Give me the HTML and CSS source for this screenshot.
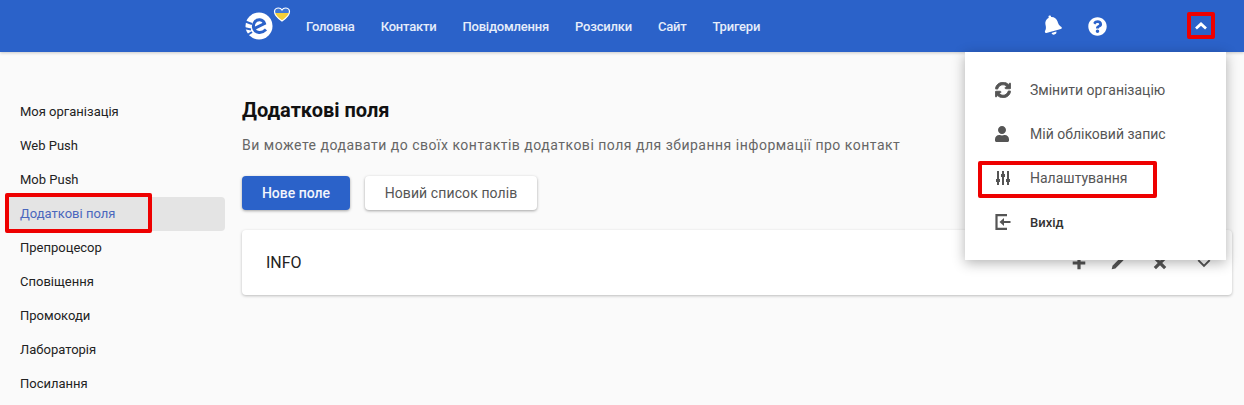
FILE: index.html
```html
<!DOCTYPE html>
<html lang="en">
<head>
  <meta charset="UTF-8">
  <meta name="viewport" content="width=device-width, initial-scale=1.0">
  <title>Додаткові поля</title>
  <link rel="stylesheet" href="styles.css">
</head>
<body>

<header class="topbar">
  <svg class="logo" viewBox="0 0 48 40" width="48" height="40">
    <defs>
      <linearGradient id="flag" x1="0" y1="0" x2="0" y2="1">
        <stop offset="0.42" stop-color="#3f78d6"/>
        <stop offset="0.42" stop-color="#f3cf3a"/>
      </linearGradient>
    </defs>
    <circle cx="16" cy="20" r="13.500" fill="#fff"/>
    <path d="M1 15 L9 18 M1 22 L8 23.500 M3 30 L9 26" stroke="#2b62c9" stroke-width="2" fill="none"/>
    <path d="M10.500 23 L21.500 17.500 C20 13 14 12.500 11.500 16.500 C9 20.500 11 26 16 26.500 C19 26.800 21 25.500 23 23.500" stroke="#2b62c9" stroke-width="3" fill="none"/>
    <path d="M39 15 C33 11 31.500 8 31.500 5.500 C31.500 3.500 33.500 2 35.500 2 C37 2 38.300 2.800 39 4 C39.700 2.800 41 2 42.500 2 C44.500 2 46.500 3.500 46.500 5.500 C46.500 8 45 11 39 15 Z" fill="url(#flag)" stroke="#fff" stroke-width="1.200"/>
  </svg>
  <nav class="topnav">
    <a href="#">Головна</a>
    <a href="#">Контакти</a>
    <a href="#">Повідомлення</a>
    <a href="#">Розсилки</a>
    <a href="#">Сайт</a>
    <a href="#">Тригери</a>
  </nav>
  <div class="top-icons">
    <svg class="bell" viewBox="0 0 448 512" width="18" height="20"><path fill="#fff" d="M224 512c35.32 0 63.97-28.65 63.97-64H160.03c0 35.35 28.65 64 63.97 64zm215.39-149.71c-19.32-20.76-55.47-51.99-55.47-154.29 0-77.7-54.48-139.9-127.94-155.16V32c0-17.67-14.32-32-31.98-32s-31.98 14.33-31.98 32v20.84C118.56 68.1 64.08 130.3 64.08 208c0 102.3-36.15 133.53-55.47 154.29-6 6.45-8.66 14.16-8.61 21.71.11 16.4 12.98 32 32.1 32h383.8c19.12 0 32-15.6 32.1-32 .05-7.55-2.61-15.27-8.61-21.71z"/></svg>
    <svg class="help" viewBox="0 0 512 512" width="19" height="19"><path fill="#fff" d="M504 256c0 136.997-111.043 248-248 248S8 392.997 8 256C8 119.083 119.043 8 256 8s248 111.083 248 248zM262.655 90c-54.497 0-89.255 22.957-116.549 63.758-3.536 5.286-2.353 12.415 2.715 16.258l34.699 26.31c5.205 3.947 12.621 3.008 16.665-2.122 17.864-22.658 30.113-35.797 57.303-35.797 20.429 0 45.698 13.148 45.698 32.958 0 14.976-12.363 22.667-32.534 33.976C247.128 238.528 216 254.941 216 296v4c0 6.627 5.373 12 12 12h56c6.627 0 12-5.373 12-12v-1.333c0-28.462 83.186-29.647 83.186-106.667 0-58.002-60.165-102-116.531-102zM256 338c-25.365 0-46 20.635-46 46 0 25.364 20.635 46 46 46s46-20.636 46-46c0-25.365-20.635-46-46-46z"/></svg>
    <span class="toggle">
      <svg viewBox="0 0 14 10" width="14" height="10"><path d="M2 7.500 L7 3 L12 7.500" fill="none" stroke="#fff" stroke-width="2.800"/></svg>
    </span>
  </div>
</header>

<div class="page">
  <aside class="sidebar">
    <a href="#">Моя організація</a>
    <a href="#">Web Push</a>
    <a href="#">Mob Push</a>
    <a href="#" class="active">Додаткові поля</a>
    <a href="#">Препроцесор</a>
    <a href="#">Сповіщення</a>
    <a href="#">Промокоди</a>
    <a href="#">Лабораторія</a>
    <a href="#">Посилання</a>
  </aside>

  <main class="content">
    <h1>Додаткові поля</h1>
    <p class="lead">Ви можете додавати до своїх контактів додаткові поля для збирання інформації про контакт</p>
    <div class="actions">
      <button class="btn btn-primary">Нове поле</button>
      <button class="btn">Новий список полів</button>
    </div>
    <section class="card">
      <span class="card-title">INFO</span>
      <div class="card-icons">
        <svg viewBox="0 0 14 14" width="16" height="16"><path d="M7 1.500 V12.500 M1.500 7 H12.500" stroke="#555" stroke-width="2.800" fill="none"/></svg>
        <svg class="icon-pencil" viewBox="0 0 14 14" width="16" height="16"><path d="M1.500 12.500 L2.200 9.300 L9.300 2.200 L11.800 4.700 L4.700 11.800 Z" fill="#555"/></svg>
        <svg viewBox="0 0 14 14" width="16" height="16"><path d="M2.500 2.500 L11.500 11.500 M11.500 2.500 L2.500 11.500" stroke="#555" stroke-width="2.800" fill="none"/></svg>
        <svg class="icon-chevron" viewBox="0 0 14 14" width="16" height="16"><path d="M2 4.500 L7 9.500 L12 4.500" stroke="#555" stroke-width="1.800" fill="none"/></svg>
      </div>
    </section>
  </main>
</div>

<div class="dropdown">
  <a href="#">
    <svg viewBox="0 0 512 512" width="16" height="16"><path fill="#555" stroke="#555" stroke-width="28" d="M370.72 133.28C339.458 104.008 298.888 87.962 255.848 88c-77.458.068-144.328 53.178-162.791 126.85-1.344 5.363-6.122 9.15-11.651 9.15H24.103c-7.498 0-13.194-6.807-11.807-14.176C33.933 94.924 134.813 8 256 8c66.448 0 126.791 26.136 171.315 68.685L463.03 40.97C478.149 25.851 504 36.559 504 57.941V192c0 13.255-10.745 24-24 24H345.941c-21.382 0-32.09-25.851-16.971-40.971l41.75-41.749zM32 296h134.059c21.382 0 32.09 25.851 16.971 40.971l-41.75 41.75c31.262 29.273 71.835 45.319 114.876 45.28 77.418-.07 144.315-53.144 162.787-126.849 1.344-5.363 6.122-9.15 11.651-9.15h57.304c7.498 0 13.194 6.807 11.807 14.176C478.067 417.076 377.187 504 256 504c-66.448 0-126.791-26.136-171.315-68.685L48.97 471.03C33.851 486.149 8 475.441 8 454.059V320c0-13.255 10.745-24 24-24z"/></svg>
    Змінити організацію
  </a>
  <a href="#">
    <svg viewBox="0 0 448 512" width="14" height="16"><path fill="#555" d="M224 256c70.7 0 128-57.3 128-128S294.7 0 224 0 96 57.3 96 128s57.3 128 128 128zm89.6 32h-16.7c-22.2 10.2-46.9 16-72.9 16s-50.6-5.800-72.900-16h-16.700C60.200 288 0 348.200 0 422.400V464c0 26.500 21.500 48 48 48h352c26.500 0 48-21.500 48-48v-41.600c0-74.200-60.200-134.400-134.400-134.400z"/></svg>
    Мій обліковий запис
  </a>
  <a href="#">
    <svg viewBox="0 0 16 16" width="16" height="16"><path d="M3 1 V15 M8 1 V15 M13 1 V15" stroke="#555" stroke-width="2" fill="none"/><path d="M1 9 H5 V12 H1 Z M6 4 H10 V7 H6 Z M11 9 H15 V12 H11 Z" fill="#555"/></svg>
    Налаштування
  </a>
  <a href="#" class="logout">
    <svg viewBox="0 0 16 16" width="16" height="16"><path d="M12 1.200 H1.500 V14.800 H12" stroke="#555" stroke-width="2.200" fill="none"/><path d="M15.500 7 V9 H9 V12 L4.500 8 L9 4 V7 Z" fill="#555"/></svg>
    Вихід
  </a>
</div>

<!-- red annotation frames -->
<div class="mark mark-toggle"></div>
<div class="mark mark-settings"></div>
<div class="mark mark-side"></div>

</body>
</html>
```
FILE: styles.css
```css
body {
  font-family: Roboto, "Liberation Sans", sans-serif;
  margin: 0;
  height: 405px;
  overflow: hidden;
  background: #fafafa;
  color: #222;
}

a {
  text-decoration: none;
  color: inherit;
}

.topbar {
  display: flex;
  align-items: center;
  height: 52px;
  background: #2b62c9;
  padding-left: 243px;
  box-shadow: 0 1px 3px rgba(0, 0, 0, 0.2);
}

.topnav {
  display: flex;
  gap: 26px;
  margin-left: 15px;
  font-size: 13px;
  font-weight: 500;
  letter-spacing: -0.2px;
  color: #e6edfa;
}

.top-icons {
  display: flex;
  align-items: center;
  margin-left: auto;
  margin-right: 36px;
}

.bell {
  transform: rotate(-15deg);
  margin-top: -2px;
}

.help {
  margin-left: 27px;
}

.toggle {
  display: flex;
  margin-left: 87px;
}

.page {
  display: flex;
}

.sidebar {
  flex: none;
  width: 220px;
  margin-left: 5px;
  padding-top: 43px;
  font-size: 13px;
}

.sidebar a {
  display: block;
  height: 34px;
  line-height: 34px;
  padding-left: 15px;
  border-radius: 4px;
}

.sidebar .active {
  background: #e4e4e4;
  color: #4a67bd;
}

.content {
  flex: 1;
  margin: 0 12px 0 17px;
  padding-top: 46px;
}

h1 {
  margin: 0;
  font-size: 20px;
  line-height: 24px;
  font-weight: 700;
  color: #111;
}

.lead {
  margin: 13px 0 0;
  font-size: 14px;
  line-height: 20px;
  letter-spacing: 0.5px;
  color: #666;
}

.actions {
  display: flex;
  gap: 15px;
  margin-top: 21px;
}

.btn {
  height: 34px;
  width: 172px;
  padding: 0;
  font-family: inherit;
  font-size: 14px;
  letter-spacing: 0.1px;
  color: #555;
  background: #fff;
  border: 0;
  border-radius: 4px;
  box-shadow: 0 1px 3px rgba(0, 0, 0, 0.35);
}

.btn-primary {
  width: 108px;
  font-weight: 500;
  letter-spacing: 0;
  color: #f2f5fc;
  background: #2b62c9;
}

.card {
  display: flex;
  align-items: center;
  justify-content: space-between;
  height: 65px;
  margin-top: 20px;
  padding: 0 20px 0 24px;
  background: #fff;
  border-radius: 4px;
  box-shadow: 0 1px 3px rgba(0, 0, 0, 0.25);
}

.card-title {
  font-size: 16px;
  color: #222;
}

.card-icons {
  display: flex;
  gap: 26px;
}

.icon-pencil {
  margin-left: -3px;
}

.icon-chevron {
  margin-left: 2px;
}

.dropdown {
  position: absolute;
  top: 52px;
  left: 965px;
  width: 261px;
  height: 208px;
  padding-top: 16px;
  box-sizing: border-box;
  background: #fff;
  box-shadow: 0 3px 12px rgba(0, 0, 0, 0.3);
  font-size: 14px;
  color: #555;
}

.dropdown a {
  display: flex;
  align-items: center;
  height: 44px;
  padding-left: 65px;
  position: relative;
}

.dropdown svg {
  position: absolute;
  left: 30px;
  top: 14px;
}

.dropdown .logout {
  font-weight: 500;
  font-size: 13px;
  color: #333;
}

.mark {
  position: absolute;
  box-sizing: border-box;
  border: 4px solid #ee0000;
  border-radius: 2px;
}

.mark-toggle {
  left: 1187px;
  top: 12px;
  width: 28px;
  height: 27px;
}

.mark-settings {
  left: 978px;
  top: 161px;
  width: 179px;
  height: 37px;
}

.mark-side {
  left: 5px;
  top: 193px;
  width: 147px;
  height: 40px;
}
```
